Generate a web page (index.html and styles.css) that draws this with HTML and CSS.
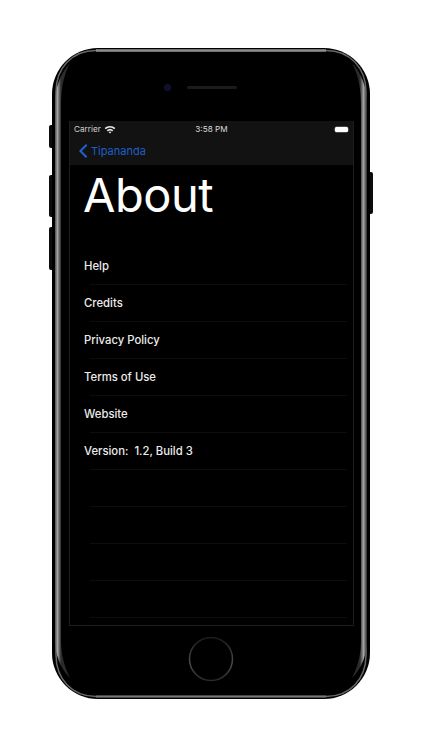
FILE: index.html
```html
<!DOCTYPE html>
<html lang="en">
<head>
<meta charset="utf-8">
<title>About</title>
<link rel="stylesheet" href="styles.css">
</head>
<body>
<div class="phone">
  <span class="btn btn-mute"></span>
  <span class="btn btn-up"></span>
  <span class="btn btn-down"></span>
  <span class="btn btn-power"></span>
  <svg class="bezel" viewBox="0 0 318 651" aria-hidden="true">
    <defs>
      <linearGradient id="band-l" gradientUnits="userSpaceOnUse" x1="2" x2="9" y1="0" y2="0">
        <stop offset="0" stop-color="#2c2c2e"/>
        <stop offset=".5" stop-color="#a2a2a4"/>
        <stop offset="1" stop-color="#2c2c2e"/>
      </linearGradient>
      <linearGradient id="band-r" gradientUnits="userSpaceOnUse" x1="308" x2="315" y1="0" y2="0">
        <stop offset="0" stop-color="#2c2c2e"/>
        <stop offset=".5" stop-color="#a2a2a4"/>
        <stop offset="1" stop-color="#2c2c2e"/>
      </linearGradient>
      <linearGradient id="home-ring" x1="0" x2="0" y1="0" y2="1">
        <stop offset="0" stop-color="#1c1c1e"/>
        <stop offset=".6" stop-color="#4c4c50"/>
        <stop offset="1" stop-color="#2a2a2c"/>
      </linearGradient>
    </defs>
    <path class="rim" d="M44 2.500H274C298 2.500 314 20 314 44V607C314 631 298 648.500 274 648.500H44C20 648.500 4 631 4 607V44C4 20 20 2.500 44 2.500Z"/>
    <path class="top-band" d="M44 2.500H274"/>
    <path class="bottom-band" d="M44 648.500H274"/>
    <path fill="url(#band-l)" d="M3 56C3 40 8 26 18 15C11 28 9 42 9 60V592C9 606 12 618 18 630C8 620 3 606 3 592Z"/>
    <path fill="url(#band-r)" d="M315 56C315 40 310 26 300 15C307 28 309 42 309 60V592C309 606 306 618 300 630C310 620 315 606 315 592Z"/>
    <circle class="home-ring" cx="159" cy="611" r="21.500" stroke="url(#home-ring)"/>
  </svg>
  <div class="earpiece">
    <span class="camera"></span>
    <span class="speaker"></span>
  </div>
  <main class="screen">
    <header class="chrome">
      <div class="status">
        <div class="status-left">
          <span>Carrier</span>
          <svg class="wifi" viewBox="0 0 12 9" aria-hidden="true">
            <path d="M.6 3.100A7.800 7.800 0 0 1 11.400 3.100L10.200 4.300A6.100 6.100 0 0 0 1.800 4.300Z"/>
            <path d="M2.700 5.200A4.800 4.800 0 0 1 9.300 5.200L8.100 6.400A3.100 3.100 0 0 0 3.900 6.400Z"/>
            <path d="M4.700 7.200A1.900 1.900 0 0 1 7.300 7.200L6 8.600Z"/>
          </svg>
        </div>
        <span class="clock">3:58 PM</span>
        <span class="battery"></span>
      </div>
      <nav class="navbar">
        <svg class="chevron" viewBox="0 0 10 16" aria-hidden="true">
          <path d="M8.500 1 1.500 8l7 7"/>
        </svg>
        <span>Tipananda</span>
      </nav>
    </header>
    <h1>About</h1>
    <ul class="list">
      <li>Help</li>
      <li>Credits</li>
      <li>Privacy Policy</li>
      <li>Terms of Use</li>
      <li>Website</li>
      <li>Version:&nbsp; 1.2, Build 3</li>
      <li></li>
      <li></li>
      <li></li>
      <li></li>
    </ul>
  </main>
</div>
</body>
</html>
```
FILE: styles.css
```css
* { box-sizing: border-box; }
html, body { margin: 0; padding: 0; }
body {
  width: 422px;
  height: 750px;
  background: #fff;
  overflow: hidden;
  padding: 48px 0 0 52px;
  font-family: Inter, "Liberation Sans", sans-serif;
}
.phone {
  position: relative;
  width: 318px;
  height: 651px;
  background: #000;
  border-radius: 46px;
  display: flex;
  flex-direction: column;
  align-items: center;
}
.btn {
  position: absolute;
  width: 4px;
  background: #0c0c0c;
  z-index: -1;
}
.btn-mute { left: -3px; top: 77px; height: 23px; border-radius: 2px 0 0 2px; }
.btn-up { left: -3px; top: 127px; height: 42px; border-radius: 2px 0 0 2px; }
.btn-down { left: -3px; top: 179px; height: 43px; border-radius: 2px 0 0 2px; }
.btn-power { right: -3px; top: 124px; height: 42px; border-radius: 0 2px 2px 0; }
.bezel {
  position: absolute;
  inset: 0;
  width: 318px;
  height: 651px;
  pointer-events: none;
}
.rim { fill: none; stroke: #68686a; stroke-width: 1.500; }
.top-band { stroke: #8e8e90; stroke-width: 2.500; fill: none; }
.bottom-band { stroke: #77777a; stroke-width: 2; fill: none; }
.home-ring { fill: none; stroke-width: 1.500; }
.earpiece {
  height: 73px;
  width: 100%;
  display: flex;
  align-items: center;
  justify-content: center;
  gap: 16px;
  padding: 5px 21px 0 0;
  flex: none;
}
.camera {
  width: 7px;
  height: 7px;
  border-radius: 50%;
  background: #0c0e2a;
  border: 1px solid #15183a;
}
.speaker {
  width: 50px;
  height: 3px;
  border-radius: 2px;
  background: #1c1c1e;
}
.screen {
  width: 285px;
  height: 505px;
  flex: none;
  align-self: flex-start;
  margin-left: 17px;
  border: 1px solid #1d1d1f;
  border-top: 0;
  background: #000;
  color: #f2f2f2;
  display: flex;
  flex-direction: column;
  overflow: hidden;
}
.chrome { background: #121212; height: 44px; flex: none; margin: 0 -1px; }
.status {
  position: relative;
  height: 16px;
  padding: 0 6px 0 5px;
  display: flex;
  align-items: center;
  justify-content: space-between;
  font-size: 8.200px;
  color: #d0d0d0;
}
.status-left { display: flex; align-items: center; gap: 3px; }
.wifi { width: 12px; height: 9px; fill: #e8e8e8; }
.clock { position: absolute; left: 0; right: 0; text-align: center; color: #dcdcdc; }
.battery {
  position: relative;
  width: 13px;
  height: 5px;
  background: #fff;
  border-radius: 1.500px;
  box-shadow: 0 0 0 .5px #777;
}
.navbar {
  height: 28px;
  padding: 0 0 0 10px;
  display: flex;
  align-items: center;
  gap: 3px;
  color: #1f5fc8;
  font-size: 11px;
}
.chevron { width: 9px; height: 16px; fill: none; stroke: #1f62d0; stroke-width: 2.200; }
h1 {
  margin: 0;
  padding: 0 0 0 13px;
  height: 83px;
  flex: none;
  font-size: 47px;
  line-height: 60px;
  font-weight: 400;
  color: #fff;
  letter-spacing: -0.500px;
}
.list {
  list-style: none;
  margin: 0;
  padding: 0;
}
.list li {
  position: relative;
  height: 37px;
  padding: 0 0 2px 14px;
  display: flex;
  align-items: center;
  font-size: 11.300px;
  font-weight: 500;
  color: #ececec;
}
.list li::after {
  content: "";
  position: absolute;
  left: 20px;
  right: 6px;
  bottom: 0;
  height: 1px;
  background: #0d0d0f;
}
```
